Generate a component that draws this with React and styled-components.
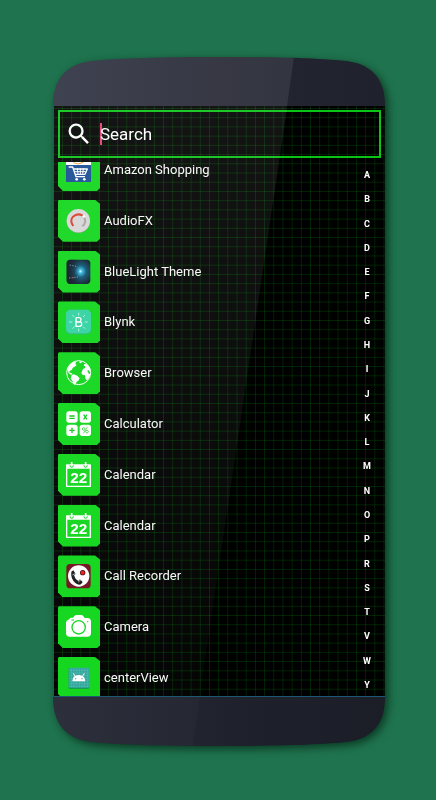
import React from 'react';
import styled, { createGlobalStyle } from 'styled-components';
import { MdSearch } from 'react-icons/md';

const GlobalStyle = createGlobalStyle`
  * {
    box-sizing: border-box;
  }

  body {
    margin: 0;
    background: #1f734e;
    font-family: Roboto, 'Liberation Sans', sans-serif;
  }
`;

const Page = styled.main`
  display: flex;
  min-height: 100vh;
  padding: 57px 51px 54px 53px;
`;

const Phone = styled.div`
  display: flex;
  flex: 1;
  flex-direction: column;
  min-width: 0;
  filter: drop-shadow(3px 3px 4px rgba(4, 36, 20, 0.75));
`;

const CapSvg = styled.svg`
  display: block;
  flex: none;
  width: 100%;
  height: 49px;
`;

const Screen = styled.div`
  position: relative;
  display: flex;
  flex: 1;
  flex-direction: column;
  gap: 4px;
  min-height: 0;
  padding-top: 4px;
  border-left: 1px solid #155f58;
  border-bottom: 1px solid #1b5876;
  background-color: #000;
  background-image:
    linear-gradient(90deg, rgba(0, 150, 10, 0.24) 1px, transparent 1px),
    linear-gradient(rgba(0, 150, 10, 0.24) 1px, transparent 1px);
  background-size: calc(100% / 36) calc(100% / 64);
  background-position: 8px 2px;
`;

const Glare = styled.div`
  position: absolute;
  inset: 0;
  pointer-events: none;
  background: linear-gradient(
    rgba(255, 255, 255, 0.08),
    rgba(255, 255, 255, 0.06) 35%,
    rgba(255, 255, 255, 0.02)
  );
  clip-path: polygon(0 0, 70.5% 0, 44% 100%, 0 100%);
`;

const SearchBar = styled.label`
  display: flex;
  align-items: center;
  gap: 7px;
  height: 48px;
  margin: 0 4px;
  padding: 0 5px;
  border: 2px solid #0ac416;
  color: #fff;

  svg {
    flex: none;
  }
`;

const Caret = styled.span`
  width: 2px;
  height: 22px;
  margin-right: -9px;
  background: #e83e72;
`;

const SearchInput = styled.input`
  flex: 1;
  min-width: 0;
  padding: 0;
  border: 0;
  outline: none;
  background: none;
  color: #fff;
  caret-color: #e83e72;
  font: 17px/24px Roboto, 'Liberation Sans', sans-serif;

  &::placeholder {
    color: #fff;
    opacity: 1;
  }
`;

const Drawer = styled.div`
  display: flex;
  flex: 1;
  justify-content: space-between;
  min-height: 0;
  overflow: hidden;
`;

const AppList = styled.ul`
  display: flex;
  flex-direction: column;
  flex: 1;
  justify-content: space-between;
  gap: 8px;
  min-width: 0;
  margin: -13px 0 -3px;
  padding: 0 0 0 4px;
  list-style: none;
`;

const AppButton = styled.button`
  display: flex;
  align-items: center;
  gap: 4px;
  width: 100%;
  padding: 0;
  border: 0;
  background: none;
  color: #f8f8f8;
  font: 13px/20px Roboto, 'Liberation Sans', sans-serif;
  text-align: left;
  cursor: pointer;
`;

const Tile = styled.span`
  display: flex;
  align-items: center;
  justify-content: center;
  flex: none;
  width: 42px;
  height: 42px;
  background: #10d61b;
  clip-path: polygon(
    0 1px,
    1px 0,
    37px 0,
    42px 4px,
    42px 39px,
    39px 42px,
    5px 42px,
    0 37px
  );
`;

const IconSvg = styled.svg`
  display: block;
  width: 26px;
  height: 26px;
`;

const LetterIndex = styled.nav`
  display: flex;
  flex: none;
  flex-direction: column;
  align-items: center;
  justify-content: space-between;
  width: 36px;
  padding: 7px 0 5px;
`;

const Letter = styled.a`
  color: #fff;
  font-size: 9px;
  font-weight: 700;
  line-height: 12px;
  text-decoration: none;
`;

const Icon = ({ children }) => (
  <IconSvg viewBox="0 0 78 78" aria-hidden="true">
    {children}
  </IconSvg>
);

const AmazonIcon = () => (
  <Icon>
    <path fill="#fff" d="M0 0h75v24H0z" />
    <path fill="none" stroke="#f0a030" strokeWidth="3" d="M22 17q15 8 30-1" />
    <path fill="#174c93" d="M0 24h75v51H0z" />
    <path
      fill="none"
      stroke="#fff"
      strokeWidth="4"
      strokeLinejoin="round"
      d="M8 30h12l10 29h27M24 36h40l-7 16H29"
    />
    <path
      stroke="#fff"
      strokeWidth="3"
      d="M34 34l2 18M43 34v18M52 34l-2 18M25 44h34"
    />
    <circle cx="32" cy="67" r="4" fill="#fff" />
    <circle cx="55" cy="67" r="4" fill="#fff" />
  </Icon>
);

const AudioIcon = () => (
  <Icon>
    <circle cx="37" cy="40" r="35" fill="#9aa39a" />
    <circle cx="37" cy="38" r="35" fill="#d6d6d6" />
    <path
      fill="none"
      stroke="#a4a4a4"
      strokeWidth="6"
      d="M54 27q9 17-5 28"
    />
    <path
      fill="none"
      stroke="#d8402c"
      strokeWidth="6"
      d="M22 54Q10 38 21 26q13-12 29-3"
    />
    <circle cx="54" cy="25" r="4" fill="#fff" />
  </Icon>
);

const BlueLightIcon = () => (
  <Icon>
    <defs>
      <radialGradient id="beam" cx="58%" cy="48%" r="55%">
        <stop offset="0" stopColor="#e8ffff" />
        <stop offset="0.12" stopColor="#3cc4ec" />
        <stop offset="0.45" stopColor="#0e5474" />
        <stop offset="1" stopColor="#0d1c2a" />
      </radialGradient>
      <linearGradient id="beamShade">
        <stop offset="0" stopColor="#0b1722" stopOpacity="0.9" />
        <stop offset="1" stopColor="#0b1722" stopOpacity="0" />
      </linearGradient>
    </defs>
    <rect x="2" y="2" width="71" height="73" rx="11" fill="url(#beam)" />
    <path fill="url(#beamShade)" d="M13 2h29v73H13Q2 75 2 64V13Q2 2 13 2z" />
    <path
      stroke="#7090a0"
      strokeWidth="3"
      strokeDasharray="4 4"
      d="M11 18l24 5M9 57l27-3"
    />
    <path stroke="#b04a3c" strokeWidth="3" d="M18 56h5" />
  </Icon>
);

const BlynkIcon = () => (
  <Icon>
    <rect y="2" width="75" height="74" rx="14" fill="#27b780" />
    <rect y="2" width="75" height="71" rx="14" fill="#32d2a0" />
    <path
      fill="none"
      stroke="#fff"
      strokeWidth="4"
      d="M30 26v26h10q7 0 7-7t-7-6H30M30 26h9q6 0 6 6t-6 7"
    />
    <path
      stroke="#e4fff4"
      strokeWidth="2"
      d="M38 11v9M38 59v8M9 39h10M56 39h9M19 18l6 6M57 18l-6 6M19 59l6-6M57 59l-6-6"
    />
  </Icon>
);

const BrowserIcon = () => (
  <Icon>
    <circle cx="38" cy="38" r="36" fill="none" stroke="#fff" strokeWidth="3" />
    <path
      fill="#fff"
      d="M4 28Q9 14 22 6l9 1-3 5 4 3-7 6-5 2-2 6-6 3-3 5 8 3 3 3-5 1-7-4L6 33zM17 46l6-3 11 4 7 8-4 7-5 3-4 8-4 1-5-12-5-6zM51 27l6-3 1-5-5-2 2-5 7 1q9 7 12 18v6l-3-2-4-5-3 2 5 10 4-1q-1 11-8 18l-3 2-4-6-1-9-7-1-4-6z"
    />
    <path fill="#fff" d="M39 5l7-1 1 4-5 2z" />
  </Icon>
);

const CalculatorIcon = () => (
  <Icon>
    <rect x="1" y="1" width="34" height="34" rx="8" fill="#fff" />
    <rect x="41" y="1" width="34" height="34" rx="8" fill="#fff" />
    <rect x="1" y="41" width="34" height="34" rx="8" fill="#fff" />
    <rect x="41" y="41" width="34" height="34" rx="8" fill="#fff" />
    <path
      stroke="#10c81b"
      strokeWidth="4"
      d="M10 15h16M10 22h16M53 11l10 14M63 11L53 25M10 58h16M18 50v16"
    />
    <path
      fill="none"
      stroke="#10c81b"
      strokeWidth="2"
      d="M64 49L52 67"
    />
    <circle cx="53" cy="54" r="4" fill="none" stroke="#10c81b" strokeWidth="2" />
    <circle cx="63" cy="62" r="4" fill="none" stroke="#10c81b" strokeWidth="2" />
  </Icon>
);

const CalendarDate = styled.text`
  fill: #fff;
  font-family: 'Liberation Sans', sans-serif;
  font-size: 46px;
  font-weight: 700;
  text-anchor: middle;
`;

const CalendarIcon = () => (
  <Icon>
    <path
      fill="none"
      stroke="#fff"
      strokeWidth="4"
      strokeLinejoin="round"
      d="M2 9h71v64H2z"
    />
    <path fill="#fff" d="M2 9h71v11H2z" />
    <path stroke="#fff" strokeWidth="5" d="M17 0v12M59 0v12" />
    <path
      fill="none"
      stroke="#10d61b"
      strokeWidth="3"
      d="M12 10q0 6 5 6t5-6M54 10q0 6 5 6t5-6"
    />
    <CalendarDate x="38" y="63">
      22
    </CalendarDate>
  </Icon>
);

const RecorderIcon = () => (
  <Icon>
    <rect x="1" y="3" width="73" height="73" rx="11" fill="#72111f" />
    <circle cx="38" cy="39" r="32" fill="#fff" />
    <path
      fill="#1a1a1a"
      d="M16 26l6-4 7 11-5 4q3 12 13 17l5-5 8 8-5 7q-8 3-17-4Q13 46 16 26z"
    />
    <path stroke="#fff" strokeWidth="2" d="M19 36l10-5M37 57l8-7" />
    <circle cx="50" cy="29" r="8" fill="#3c0b10" />
    <circle cx="50" cy="29" r="6" fill="#f01818" />
  </Icon>
);

const CameraIcon = () => (
  <Icon>
    <path
      fill="#fff"
      d="M10 16q1-5 5-5h6l5-6q2-2 5-2h15q3 0 5 2l5 7h9q10 1 10 11v34q0 11-11 11H11Q0 68 0 57V28q0-9 10-12z"
    />
    <circle cx="38" cy="40" r="20" fill="none" stroke="#10d61b" strokeWidth="4" />
    <path stroke="#10d61b" strokeWidth="3" d="M16 18h8" />
    <circle cx="65" cy="23" r="2" fill="#10d61b" />
  </Icon>
);

const CenterViewIcon = () => (
  <Icon>
    <rect x="8" y="10" width="61" height="61" rx="3" fill="#14875c" />
    <rect x="8" y="8" width="61" height="60" rx="3" fill="#2da59b" />
    <path
      stroke="#67c4bc"
      strokeWidth="1"
      d="M16 8v60M24 8v60M32 8v60M40 8v60M48 8v60M56 8v60M64 8v60M8 16h61M8 24h61M8 32h61M8 40h61M8 48h61M8 56h61M8 64h61"
    />
    <path fill="#fff" d="M19 49q1-19 19-19t20 19z" />
    <path stroke="#fff" strokeWidth="3" d="M22 25l6 10M55 25l-6 10" />
    <circle cx="29" cy="41" r="2" fill="#2da59b" />
    <circle cx="48" cy="41" r="2" fill="#2da59b" />
  </Icon>
);

const APPS = [
  { name: 'Amazon Shopping', Glyph: AmazonIcon },
  { name: 'AudioFX', Glyph: AudioIcon },
  { name: 'BlueLight Theme', Glyph: BlueLightIcon },
  { name: 'Blynk', Glyph: BlynkIcon },
  { name: 'Browser', Glyph: BrowserIcon },
  { name: 'Calculator', Glyph: CalculatorIcon },
  { name: 'Calendar', Glyph: CalendarIcon },
  { name: 'Calendar', Glyph: CalendarIcon },
  { name: 'Call Recorder', Glyph: RecorderIcon },
  { name: 'Camera', Glyph: CameraIcon },
  { name: 'centerView', Glyph: CenterViewIcon },
];

const LETTERS = 'ABCDEFGHIJKLMNOPRSTVWY'.split('');

const TopCap = () => (
  <CapSvg viewBox="0 0 332 49" preserveAspectRatio="none" aria-hidden="true">
    <defs>
      <linearGradient id="topBody">
        <stop offset="0" stopColor="#2f3241" />
        <stop offset="0.7" stopColor="#222430" />
        <stop offset="1" stopColor="#1f212c" />
      </linearGradient>
      <clipPath id="topShape">
        <path d="M0 49C0 25 10 8 38 4C70 1 110 0 166 0C222 0 262 1 294 4C322 8 332 25 332 49z" />
      </clipPath>
    </defs>
    <g clipPath="url(#topShape)">
      <path fill="url(#topBody)" d="M0 0h332v49H0z" />
      <path fill="#fff" fillOpacity="0.08" d="M0 0h241l-7 49H0z" />
    </g>
  </CapSvg>
);

const BottomCap = () => (
  <CapSvg viewBox="0 0 332 49" preserveAspectRatio="none" aria-hidden="true">
    <defs>
      <linearGradient id="bottomBody">
        <stop offset="0" stopColor="#292b39" />
        <stop offset="0.6" stopColor="#1e202b" />
        <stop offset="1" stopColor="#1b1d27" />
      </linearGradient>
      <clipPath id="bottomShape">
        <path d="M0 0C0 24 10 41 38 45C70 48 110 49 166 49C222 49 262 48 294 45C322 41 332 24 332 0z" />
      </clipPath>
    </defs>
    <g clipPath="url(#bottomShape)">
      <path fill="url(#bottomBody)" d="M0 0h332v49H0z" />
      <path fill="#fff" fillOpacity="0.02" d="M0 0h147l-7 49H0z" />
    </g>
  </CapSvg>
);

const App = () => (
  <>
    <GlobalStyle />
    <Page>
      <Phone>
        <TopCap />
        <Screen>
          <SearchBar>
            <MdSearch size={28} aria-hidden="true" />
            <Caret />
            <SearchInput type="text" placeholder="Search" aria-label="Search" />
          </SearchBar>
          <Drawer>
            <AppList>
              {APPS.map(({ name, Glyph }, i) => (
                <li key={i}>
                  <AppButton type="button">
                    <Tile>
                      <Glyph />
                    </Tile>
                    {name}
                  </AppButton>
                </li>
              ))}
            </AppList>
            <LetterIndex aria-label="Jump to letter">
              {LETTERS.map(letter => (
                <Letter key={letter} href={`#${letter}`}>
                  {letter}
                </Letter>
              ))}
            </LetterIndex>
          </Drawer>
          <Glare />
        </Screen>
        <BottomCap />
      </Phone>
    </Page>
  </>
);

export default App;
